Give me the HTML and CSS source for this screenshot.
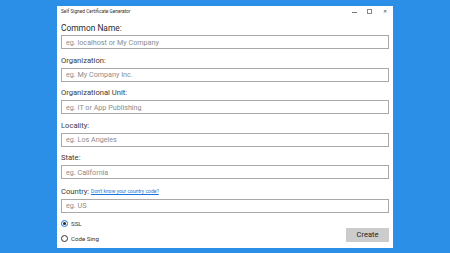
FILE: index.html
```html
<!DOCTYPE html>
<html lang="en">
<head>
  <meta charset="UTF-8">
  <title>Self Signed Certificate Generator</title>
  <meta name="viewport" content="width=device-width, initial-scale=1.0">
  <link rel="stylesheet" href="styles.css">
</head>
<body>
  <div class="window">
    <div class="titlebar">
      <span class="title">Self Signed Certificate Generator</span>
      <div class="caption-buttons">
        <span class="cap min"></span>
        <span class="cap max"></span>
        <span class="cap close">&#x2715;</span>
      </div>
    </div>

    <div class="form">
      <div class="field">
        <label class="big">Common Name:</label>
        <input type="text" placeholder="eg. localhost or My Company">
      </div>
      <div class="field">
        <label>Organization:</label>
        <input type="text" placeholder="eg. My Company Inc.">
      </div>
      <div class="field">
        <label>Organizational Unit:</label>
        <input type="text" placeholder="eg. IT or App Publishing">
      </div>
      <div class="field">
        <label>Locality:</label>
        <input type="text" placeholder="eg. Los Angeles">
      </div>
      <div class="field">
        <label>State:</label>
        <input type="text" placeholder="eg. California">
      </div>
      <div class="field">
        <label>Country: <a class="hint" href="#">Don't know your country code?</a></label>
        <input type="text" placeholder="eg. US">
      </div>

      <div class="bottom">
        <div class="radios">
          <div class="radio checked"><span class="dot"></span>SSL</div>
          <div class="radio"><span class="dot"></span>Code Sing</div>
        </div>
        <button class="create">Create</button>
      </div>
    </div>
  </div>
</body>
</html>
```

FILE: styles.css
```css
* {
  margin: 0;
  padding: 0;
  box-sizing: border-box;
}

body {
  width: 450px;
  height: 253px;
  background: #2b8fe8;
  font-family: Roboto, 'Open Sans', sans-serif;
  color: #333;
  overflow: hidden;
}

.window {
  margin: 6px 0 0 57px;
  width: 336px;
  height: 242px;
  background: #fff;
  display: flex;
  flex-direction: column;
}

.titlebar {
  height: 11px;
  display: flex;
  align-items: center;
  justify-content: space-between;
  padding: 0 6px 0 4px;
}

.title {
  font-size: 4.8px;
  color: #333;
}

.caption-buttons {
  display: flex;
  align-items: center;
  gap: 10px;
}

.cap {
  width: 5px;
  height: 5px;
  display: block;
}

.min {
  border-bottom: 1px solid #777;
  height: 3px;
}

.max {
  border: 1px solid #888;
}

.close {
  font-size: 5px;
  line-height: 5px;
  color: #444;
  text-align: center;
}

.form {
  padding: 0 4px;
  display: flex;
  flex-direction: column;
}

.field {
  display: flex;
  flex-direction: column;
}

label {
  font-size: 7.6px;
  line-height: 10px;
  margin: 6.6px 0 2px;
  color: #3a3a3a;
}

label.big {
  font-size: 8.4px;
  line-height: 11px;
  color: #2a2a2a;
  margin-top: 6px;
  margin-bottom: 1px;
}

.hint {
  font-size: 5px;
  color: #1a73d9;
  vertical-align: 1px;
}

input {
  height: 14px;
  border: 1px solid #a9a9a9;
  font-family: inherit;
  font-size: 7.2px;
  padding: 0 4px;
  outline: none;
}

input::placeholder {
  color: #8c8c8c;
}

.bottom {
  display: flex;
  justify-content: space-between;
  align-items: flex-end;
  margin-top: 7px;
}

.radios {
  display: flex;
  flex-direction: column;
  gap: 7px;
}

.radio {
  display: flex;
  align-items: center;
  gap: 3px;
  font-size: 6.2px;
  line-height: 8px;
  color: #333;
}

.dot {
  width: 7px;
  height: 7px;
  border: 1px solid #333;
  border-radius: 50%;
  display: flex;
  align-items: center;
  justify-content: center;
}

.checked .dot {
  border-color: #1a73d9;
}

.checked .dot::after {
  content: '';
  width: 3px;
  height: 3px;
  border-radius: 50%;
  background: #222;
}

.create {
  width: 43px;
  height: 14px;
  border: none;
  background: #cccccc;
  font-family: inherit;
  font-size: 7.5px;
  color: #222;
  margin-bottom: 1px;
}
```
